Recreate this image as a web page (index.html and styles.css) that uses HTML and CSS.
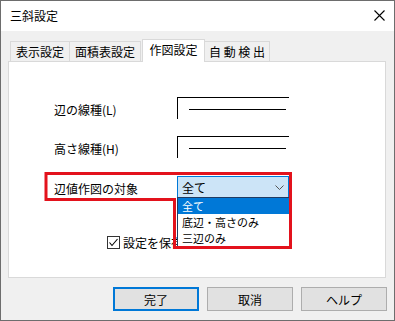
FILE: index.html
```html
<!DOCTYPE html>
<html lang="ja">
<head>
    <meta charset="UTF-8">
    <title>三斜設定</title>
    <link rel="stylesheet" href="styles.css">
</head>
<body>
    <div class="window">
        <div class="titlebar">
            <span class="title">三斜設定</span>
            <svg class="close" width="11" height="11" viewBox="0 0 11 11">
                <path d="M0.5 0.5 L10.5 10.5 M10.5 0.5 L0.5 10.5" stroke="#000" stroke-width="1.1" fill="none"/>
            </svg>
        </div>
        <div class="body">
            <div class="tabs">
                <div class="tab tab-1">表示設定</div>
                <div class="tab tab-2">面積表設定</div>
                <div class="tab tab-active">作図設定</div>
                <div class="tab tab-4">自 動 検 出</div>
            </div>
            <div class="panel">
                <div class="row">
                    <span class="label">辺の線種(L)</span>
                    <div class="linebox"><span class="stroke"></span></div>
                </div>
                <div class="row row-2">
                    <span class="label">高さ線種(H)</span>
                    <div class="linebox"><span class="stroke"></span></div>
                </div>
                <div class="row row-3">
                    <span class="label">辺値作図の対象</span>
                    <div class="combo">
                        <span class="combo-value">全て</span>
                        <svg class="chevron" width="9" height="5" viewBox="0 0 9 5">
                            <polyline points="0.5,0.5 4.5,4.5 8.5,0.5" stroke="#555" stroke-width="1" fill="none"/>
                        </svg>
                        <ul class="droplist">
                            <li class="selected">全て</li>
                            <li>底辺・高さのみ</li>
                            <li>三辺のみ</li>
                        </ul>
                    </div>
                </div>
                <label class="check-row">
                    <span class="checkbox">
                        <svg width="11" height="11" viewBox="0 0 11 11">
                            <polyline points="1.5,5.5 4,8.5 9.5,2" stroke="#000" stroke-width="1.1" fill="none"/>
                        </svg>
                    </span>
                    <span>設定を保存</span>
                </label>
            </div>
            <div class="buttons">
                <button class="btn btn-default">完了</button>
                <button class="btn">取消</button>
                <button class="btn">ヘルプ</button>
            </div>
        </div>
        <!-- red marker drawn over the combo area -->
        <svg class="highlight" width="395" height="321" viewBox="0 0 395 321">
            <path d="M46 173.5 H290.5 V247.5 H174.5 V199.5 H46 Z" stroke="#e3121c" stroke-width="3" fill="none"/>
        </svg>
    </div>
</body>
</html>
```

FILE: styles.css
```css
* {
    box-sizing: border-box;
}
body {
    margin: 0;
    font-family: "Noto Sans CJK JP", "Noto Sans", sans-serif;
    font-size: 12px;
    color: #000;
    background-color: #f0f0f0;
}
.window {
    position: relative;
    width: 395px;
    height: 321px;
    border: 1px solid #6d6d6d;
    background-color: #f0f0f0;
    display: flex;
    flex-direction: column;
}
.titlebar {
    height: 30px;
    background-color: #fff;
    display: flex;
    align-items: center;
    justify-content: space-between;
    padding: 0 9px 1px 9px;
}
.body {
    flex-grow: 1;
    padding: 8px 8px 9px 7px;
    display: flex;
    flex-direction: column;
}
.tabs {
    display: flex;
    align-items: flex-end;
    height: 23px;
    padding-left: 2px;
    position: relative;
    z-index: 1;
}
.tab {
    height: 20px;
    margin-bottom: 1px;
    border: 1px solid #d9d9d9;
    border-bottom: none;
    background-color: #f0f0f0;
    display: flex;
    align-items: center;
    justify-content: center;
    line-height: 1;
    padding-top: 1px;
}
.tab-1 {
    width: 60px;
}
.tab-2 {
    width: 72px;
    margin-left: -1px;
}
.tab-active {
    width: 63px;
    height: 23px;
    margin-bottom: 0;
    margin-left: 1px;
    background-color: #fff;
    padding-top: 0;
    padding-bottom: 3px;
}
.tab-4 {
    width: 66px;
    margin-left: -1px;
}
.panel {
    height: 217px;
    margin-top: -1px;
    border: 1px solid #d9d9d9;
    background-color: #fff;
    padding: 35px 0 0 45px;
}
.row {
    display: flex;
    align-items: center;
    height: 22px;
}
.row-2 {
    margin-top: 17px;
}
.row-3 {
    margin-top: 18px;
}
.label {
    width: 123px;
    padding-top: 2px;
}
.linebox {
    width: 112px;
    height: 22px;
    border-top: 1px solid #000;
    border-left: 1px solid #000;
    padding: 11px 0 0 11px;
}
.linebox .stroke {
    display: block;
    width: 97px;
    height: 1px;
    background-color: #000;
}
.combo {
    position: relative;
    width: 112px;
    height: 22px;
    border: 1px solid #0078d7;
    background-color: #cce4f7;
    display: flex;
    align-items: center;
    justify-content: space-between;
    padding: 0 4px 0 4px;
}
.chevron {
    margin-top: 1px;
}
.droplist {
    position: absolute;
    left: -1px;
    top: 20px;
    width: 113px;
    margin: 0;
    padding: 0;
    list-style: none;
    border: 1px solid #1f3b63;
    background-color: #fff;
    font-size: 11px;
    z-index: 2;
}
.droplist li {
    height: 16px;
    line-height: 16px;
    padding-left: 4px;
}
.droplist li.selected {
    background-color: #0078d7;
    color: #fff;
}
.check-row {
    display: flex;
    align-items: center;
    margin-top: 38px;
    padding-left: 53px;
    height: 13px;
}
.checkbox {
    width: 13px;
    height: 13px;
    border: 1px solid #333;
    background-color: #fff;
    margin-right: 3px;
    display: flex;
    align-items: center;
    justify-content: center;
}
.buttons {
    display: flex;
    justify-content: flex-end;
    gap: 8px;
    margin-top: 9px;
    margin-right: -1px;
}
.btn {
    width: 86px;
    height: 24px;
    border: 1px solid #adadad;
    background-color: #e1e1e1;
    font-family: inherit;
    font-size: 12px;
    color: #000;
    padding: 0;
}
.btn-default {
    border: 2px solid #0078d7;
}
.highlight {
    position: absolute;
    left: -1px;
    top: -1px;
    pointer-events: none;
    z-index: 3;
}
```
